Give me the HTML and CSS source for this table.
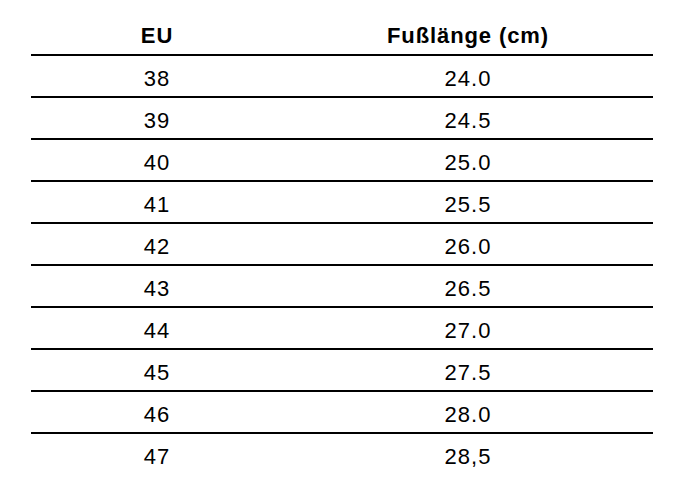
FILE: index.html
```html
<!DOCTYPE html>
<html lang="de">
<head>
    <meta charset="UTF-8">
    <title>Größentabelle</title>
    <link rel="stylesheet" href="styles.css">
</head>
<body>
    <table class="size-table">
        <thead>
            <tr>
                <th class="col-eu">EU</th>
                <th class="col-len">Fußlänge (cm)</th>
            </tr>
        </thead>
        <tbody>
            <tr><td>38</td><td>24.0</td></tr>
            <tr><td>39</td><td>24.5</td></tr>
            <tr><td>40</td><td>25.0</td></tr>
            <tr><td>41</td><td>25.5</td></tr>
            <tr><td>42</td><td>26.0</td></tr>
            <tr><td>43</td><td>26.5</td></tr>
            <tr><td>44</td><td>27.0</td></tr>
            <tr><td>45</td><td>27.5</td></tr>
            <tr><td>46</td><td>28.0</td></tr>
            <tr><td>47</td><td>28,5</td></tr>
        </tbody>
    </table>
</body>
</html>
```

FILE: styles.css
```css
* {
    margin: 0;
    padding: 0;
    box-sizing: border-box;
}
body {
    background: #fff;
    color: #000;
    font-family: "Liberation Sans", Arial, sans-serif;
    padding: 13px 0 0 31px;
}
.size-table {
    width: 622px;
    border-collapse: collapse;
    table-layout: fixed;
}
.col-eu {
    width: 251px;
}
th, td {
    height: 42px;
    padding: 11px 0 5px 1px;
    line-height: 24px;
    font-size: 22px;
    letter-spacing: 1px;
    text-align: center;
    vertical-align: top;
    border-bottom: 2px solid #000;
}
th {
    font-weight: bold;
    letter-spacing: 0.9px;
}
tbody tr:last-child td {
    border-bottom: none;
}
```
